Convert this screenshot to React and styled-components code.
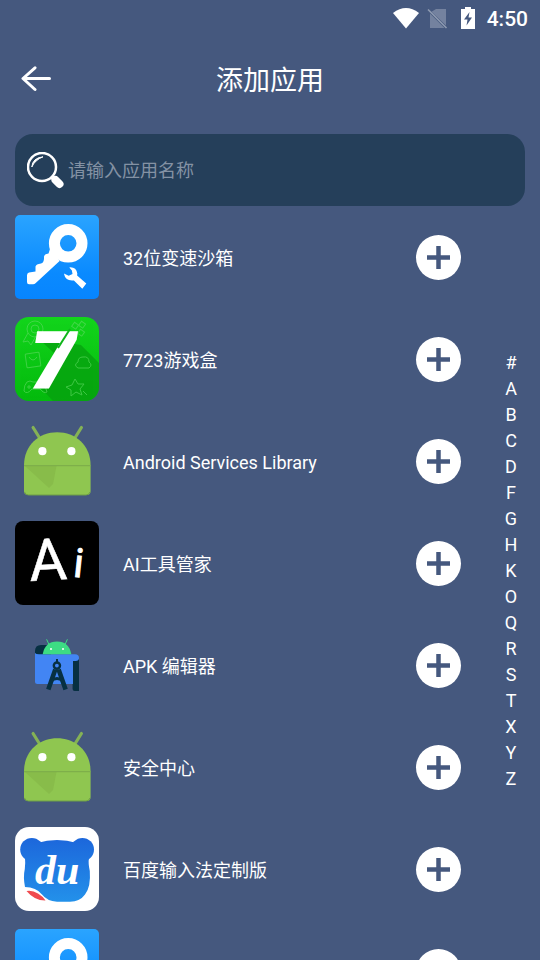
import React, { useState } from 'react'
import styled, { createGlobalStyle } from 'styled-components'

const GlobalStyle = createGlobalStyle`
	* {
		box-sizing: border-box;
	}
	body {
		margin: 0;
		background-color: #45587e;
		color: #fff;
		font-family: Roboto, 'Noto Sans CJK SC', sans-serif;
	}
	button,
	input {
		font-family: inherit;
	}
`
const PageContainer = styled.div`
	display: flex;
	flex-direction: column;
	height: 100vh;
	overflow: hidden;
`
const StatusBar = styled.div`
	display: flex;
	flex-shrink: 0;
	align-items: center;
	justify-content: flex-end;
	height: 36px;
	padding-right: 12px;
`
const StatusIcons = styled.div`
	display: flex;
	align-items: center;
	gap: 8px;
	margin-right: 8px;
`
const Time = styled.time`
	padding-top: 2px;
	font-size: 21px;
	font-weight: 500;
	line-height: 34px;
`
const HeaderContainer = styled.header`
	display: grid;
	flex-shrink: 0;
	grid-template-columns: 72px 1fr 72px;
	align-items: center;
	height: 86px;
`
const BackButton = styled.button`
	display: flex;
	align-items: center;
	justify-content: center;
	height: 72px;
	padding: 0;
	border: none;
	background: none;
`
const Title = styled.h1`
	margin: 0;
	padding-top: 4px;
	font-size: 27px;
	font-weight: 400;
	line-height: 40px;
	text-align: center;
`
const SearchContainer = styled.label`
	display: flex;
	flex-shrink: 0;
	align-items: center;
	gap: 4px;
	height: 72px;
	margin: 12px 15px 0;
	padding: 0 12px;
	border-radius: 18px;
	background-color: #253f5a;
`
const SearchInput = styled.input`
	flex: 1;
	min-width: 0;
	padding: 2px 0 0;
	border: none;
	outline: none;
	background: none;
	color: #fff;
	font-size: 18px;
	line-height: 26px;
	&::placeholder {
		color: #8492a4;
		opacity: 1;
	}
`
const ContentContainer = styled.main`
	display: flex;
	flex: 1;
	min-height: 0;
`
const AppList = styled.ul`
	display: flex;
	flex: 1;
	flex-direction: column;
	gap: 18px;
	margin: 0;
	padding: 9px 21px 0 15px;
	overflow: hidden;
	list-style: none;
`
const AppRow = styled.li`
	display: flex;
	flex-shrink: 0;
	align-items: center;
	gap: 24px;
`
const AppIcon = styled.svg`
	display: block;
	flex-shrink: 0;
	width: 84px;
	height: 84px;
	border-radius: ${({ $radius }) => $radius || 0}px;
`
const AppName = styled.span`
	flex: 1;
	padding-top: 4px;
	font-size: 18px;
	line-height: 26px;
`
const AddButton = styled.button`
	display: flex;
	align-items: center;
	justify-content: center;
	width: 45px;
	height: 45px;
	padding: 0;
	border: none;
	border-radius: 50%;
	background-color: #fff;
`
const IndexBar = styled.nav`
	display: flex;
	flex-direction: column;
	align-items: center;
	justify-content: center;
	width: 58px;
	padding-bottom: 24px;
`
const IndexLink = styled.a`
	color: #fff;
	font-size: 18px;
	line-height: 26px;
	text-decoration: none;
`

const KeyIcon = () => (
	<AppIcon viewBox="0 0 84 84" $radius={5}>
		<defs>
			<linearGradient id="keyBg" x1="0" y1="0" x2="0" y2="1">
				<stop offset="0" stopColor="#2aa4ff" />
				<stop offset="0.7" stopColor="#0a8aff" />
				<stop offset="1" stopColor="#0785ff" />
			</linearGradient>
		</defs>
		<rect width="84" height="84" fill="url(#keyBg)" />
		<circle cx="53.2" cy="28.3" r="13.8" fill="none" stroke="#fff" strokeWidth="11" />
		<path
			d="M35 34l-1.500 4.500q-4 .5-4.500 3v2.500q-.5 4-3 4.500-5 .5-5.500 3v5l-6.500 1q-2 .6-2 2.800V67q0 2.200 2 2.200h4q1.600 0 2.800-1.200L44.600 46z"
			fill="#fff"
		/>
		<path
			d="M54.3 52.4q7-.6 8 6l-.2 2.200 9.200 7.800-4 5.300-8.400-8.300q-8.600 1-10-6.800l4.800 2.200 3.800-1.800-.6-3.400z"
			fill="#fff"
		/>
	</AppIcon>
)

const GameBoxIcon = () => (
	<AppIcon viewBox="0 0 84 84" $radius={14}>
		<defs>
			<linearGradient id="gameBg" x1="0" y1="0" x2="0" y2="1">
				<stop offset="0" stopColor="#13d51c" />
				<stop offset="1" stopColor="#04ba0d" />
			</linearGradient>
		</defs>
		<rect width="84" height="84" fill="url(#gameBg)" />
		<path d="M66 28l18 18v38H38L25 70l14-34-15-14z" fill="#079d10" opacity="0.7" />
		<g fill="none" stroke="#5bd85e" strokeWidth="1" opacity="0.65">
			<circle cx="20" cy="12" r="8" />
			<circle cx="20" cy="12" r="4" />
			<path d="M13 16l-5 9 5-1 3 4 5-9" />
			<rect x="11" y="36" width="14" height="14" rx="1" transform="rotate(-8 18 43)" />
			<path d="M14 40q4 6 8 0" />
			<path d="M12 65q3-2 6 0h5q5-2 7 4l2 6q-3 2-7-3h-8q-5 6-8 2 0-6 3-9zM14 68v4m-2-2h4" />
			<rect x="58" y="6" width="5" height="5" transform="rotate(35 60 8)" />
			<rect x="65" y="5" width="5" height="5" transform="rotate(35 67 7)" />
			<rect x="64" y="13" width="5" height="5" transform="rotate(35 66 15)" />
			<path d="M63 51h11q4-3 0-6 0-6-6-5-5 0-5 5-5 3 0 6z" />
			<path d="M60 62l3 5 6 0-4 5 2 6-6-3-5 4 0-6-5-3 6-2zM68 74l4 4" />
		</g>
		<text
			x="16"
			y="70"
			fill="#fff"
			stroke="#fff"
			strokeWidth="2"
			fontFamily="Roboto"
			fontSize="78"
			fontStyle="italic"
			fontWeight="900"
		>
			7
		</text>
		<path d="M55 12L43 31" stroke="#0fb51a" strokeWidth="2" />
	</AppIcon>
)

const AndroidIcon = () => (
	<AppIcon viewBox="0 0 84 84">
		<path
			d="M18 8.400l7 11.200M66.500 8.400l-7 11.200"
			stroke="#84b255"
			strokeWidth="3"
			strokeLinecap="round"
		/>
		<path
			d="M9 46.500C9 26 24 13.200 42.200 13.200S75.600 26 75.600 46.500V72q0 4-4 4H13q-4 0-4-4z"
			fill="#8fc650"
		/>
		<path d="M10 47h31.500L38 65l-4 4z" fill="#7aa83e" opacity="0.35" />
		<path d="M9 46.700h66.600" stroke="#7aab49" strokeWidth="1" />
		<path d="M9.500 73q1 3 4 3H71q3 0 4-3" fill="none" stroke="#6f9f46" strokeWidth="1" />
		<circle cx="27.4" cy="32.2" r="4.1" fill="#fff" />
		<circle cx="56.4" cy="32.2" r="4.1" fill="#fff" />
	</AppIcon>
)

const AiIcon = () => (
	<AppIcon viewBox="0 0 84 84" $radius={8}>
		<rect width="84" height="84" fill="#000" />
		<g fill="#fff" stroke="#fff" fontFamily="Roboto">
			<text x="14" y="59" fontSize="58" strokeWidth="0.5" transform="rotate(-3 33 40)">
				A
			</text>
			<text x="59" y="56" fontSize="40" strokeWidth="1" transform="rotate(6 64 42)">
				i
			</text>
		</g>
	</AppIcon>
)

const ApkIcon = () => (
	<AppIcon viewBox="0 0 84 84">
		<path d="M20 33v-5q0-6 6-6h10v12z" fill="#073042" />
		<path d="M57.600 36H64v32h-4.400q-2 0-2-2z" fill="#073042" />
		<path
			d="M20 30q1 1.300 4 1.300h36q4 0 4 3.700 0 3-3.400 3H58v23H22.500Q20 61 20 58.500z"
			fill="#4285f4"
		/>
		<path d="M27.700 31.300Q30 18.500 42 18.500t14.300 12.800z" fill="#3ddc84" />
		<path d="M34 21.500l-2.400-5.200M50 21.500l2.400-5.200" stroke="#3ddc84" strokeWidth="1" />
		<circle cx="36" cy="26" r="1" fill="#fff" />
		<circle cx="48" cy="26" r="1" fill="#fff" />
		<g fill="none" stroke="#073042">
			<path d="M42 36v4" strokeWidth="2" />
			<circle cx="41.9" cy="42.6" r="3.1" strokeWidth="2.4" />
			<path d="M40.300 46.500l-7 20M43.600 46.500l7 20" strokeWidth="4.6" />
			<path d="M36 58q6-5 12 0" strokeWidth="3" />
		</g>
	</AppIcon>
)

const BaiduIcon = () => (
	<AppIcon viewBox="0 0 84 84" $radius={14}>
		<defs>
			<linearGradient id="bearBg" x1="0" y1="10" x2="0" y2="75" gradientUnits="userSpaceOnUse">
				<stop offset="0" stopColor="#1c66db" />
				<stop offset="1" stopColor="#2391ea" />
			</linearGradient>
		</defs>
		<rect width="84" height="84" fill="#fff" />
		<g fill="url(#bearBg)">
			<circle cx="16.800" cy="22.500" r="11.600" />
			<circle cx="67.400" cy="22.500" r="11.600" />
			<path d="M22 16Q42 10 62 16L74 31q-1 5 .8 13Q76 60 70 67.500 65 74.500 55 74.800H42Q32 74 27 67.500 21 60 10 60 8 50 9.800 42 10.500 35 10 31z" />
		</g>
		<path d="M11.500 64q6-1 11.500 2.500 5 3 7.500 7-11 .2-19-9.500z" fill="#f04b4f" />
		<text
			x="20"
			y="57"
			fill="#fff"
			fontFamily="Liberation Serif"
			fontSize="42"
			fontStyle="italic"
			fontWeight="700"
		>
			du
		</text>
	</AppIcon>
)

const WifiIcon = () => (
	<svg width="26" height="21" viewBox="0 0 26 21">
		<path d="M0 5Q13-5 26 5L13 20.500z" fill="#fff" />
	</svg>
)

const NoSimIcon = () => (
	<svg width="22" height="22" viewBox="0 0 22 22">
		<path d="M9 2h10v16.500L4.500 4.800zM3 6.500L17.500 21H3z" fill="#74829f" />
		<path d="M1 2.500l18.500 18.500" stroke="#8f9bb1" strokeWidth="1.600" />
	</svg>
)

const BatteryIcon = () => (
	<svg width="22" height="23" viewBox="0 0 22 23">
		<path d="M4 2h4V0h6v2h4v20H4z" fill="#fff" />
		<path d="M12.500 5L7 12.500h3.500L9.500 18.500 15 10.500h-3.500z" fill="#45587e" />
	</svg>
)

const BackIcon = () => (
	<svg width="30" height="26" viewBox="0 0 30 26">
		<path
			d="M14 1.800L2 12.500l12 11M2.500 12.500h26"
			fill="none"
			stroke="#fff"
			strokeWidth="3"
			strokeLinecap="round"
			strokeLinejoin="round"
		/>
	</svg>
)

const SearchIcon = () => (
	<svg width="37" height="37" viewBox="0 0 37 37">
		<circle cx="15" cy="15" r="14" fill="none" stroke="#fff" strokeWidth="2.500" />
		<path d="M4.800 15Q5.500 6 16 4.800 8 8 4.800 15z" fill="#fff" stroke="#fff" strokeWidth="1" />
		<path d="M25 25l2 2" stroke="#fff" strokeWidth="4" />
		<path d="M28.500 28l4 4" stroke="#fff" strokeWidth="8" strokeLinecap="round" />
	</svg>
)

const PlusIcon = () => (
	<svg width="23" height="23" viewBox="0 0 23 23">
		<path d="M11.500 0v23M0 11.500h23" stroke="#45587e" strokeWidth="4.500" />
	</svg>
)

const apps = [
	{ id: 1, name: '32位变速沙箱', Icon: KeyIcon },
	{ id: 2, name: '7723游戏盒', Icon: GameBoxIcon },
	{ id: 3, name: 'Android Services Library', Icon: AndroidIcon },
	{ id: 4, name: 'AI工具管家', Icon: AiIcon },
	{ id: 5, name: 'APK 编辑器', Icon: ApkIcon },
	{ id: 6, name: '安全中心', Icon: AndroidIcon },
	{ id: 7, name: '百度输入法定制版', Icon: BaiduIcon },
	{ id: 8, name: '', Icon: KeyIcon },
]
const letters = '#ABCDFGHKOQRSTXYZ'.split('')

const App = () => {
	const [query, setQuery] = useState('')
	const visibleApps = apps.filter(({ name }) => name.includes(query))

	return (
		<PageContainer>
			<GlobalStyle />
			<StatusBar>
				<StatusIcons>
					<WifiIcon />
					<NoSimIcon />
					<BatteryIcon />
				</StatusIcons>
				<Time>4:50</Time>
			</StatusBar>
			<HeaderContainer>
				<BackButton>
					<BackIcon />
				</BackButton>
				<Title>添加应用</Title>
			</HeaderContainer>
			<SearchContainer>
				<SearchIcon />
				<SearchInput
					type="text"
					placeholder="请输入应用名称"
					value={query}
					onChange={(e) => setQuery(e.target.value)}
				/>
			</SearchContainer>
			<ContentContainer>
				<AppList>
					{visibleApps.map(({ id, name, Icon }) => (
						<AppRow key={id}>
							<Icon />
							<AppName>{name}</AppName>
							<AddButton>
								<PlusIcon />
							</AddButton>
						</AppRow>
					))}
				</AppList>
				<IndexBar>
					{letters.map((letter) => (
						<IndexLink key={letter} href={`#${letter}`}>
							{letter}
						</IndexLink>
					))}
				</IndexBar>
			</ContentContainer>
		</PageContainer>
	)
}

export default App
